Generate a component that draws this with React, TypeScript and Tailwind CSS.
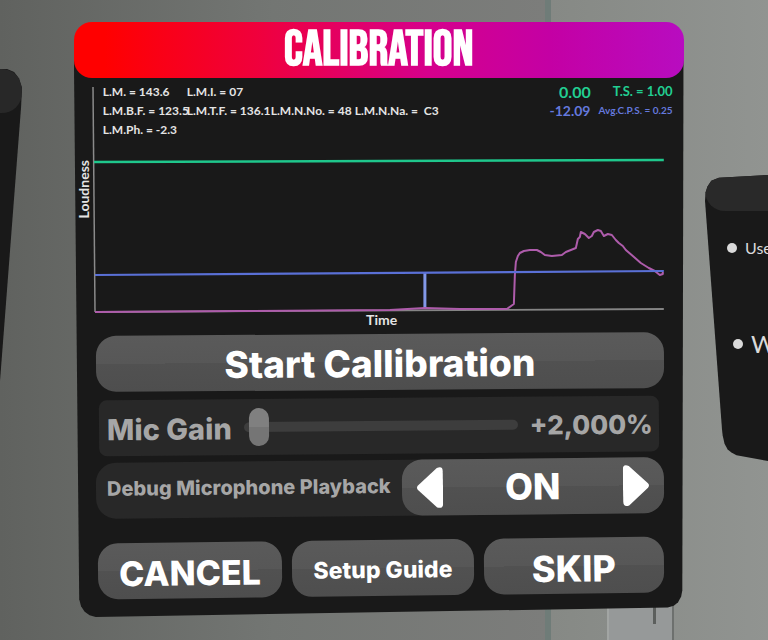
import { useState } from 'react';
import type { ReactNode } from 'react';

const readouts = [
  ['L.M. = 143.6', 'L.M.I. = 07'],
  ['L.M.B.F. = 123.5', 'L.M.T.F. = 136.1', 'L.M.N.No. = 48', 'L.M.N.Na. =  C3'],
  ['L.M.Ph. = -2.3'],
];

const loudness =
  '95,312 240,311 390,310 425,308 460,309 507,309 514,304 515,275 516,262 518,256 520,253 524,251 530,250 537,250 541,252 545,255 552,256 562,255 566,252 571,250 576,248 578,239 580,237 581,232 585,234 589,238 592,236 594,232 598,230 601,231 604,236 608,234 612,235 616,240 619,243 623,246 626,250 633,256 641,263 649,268 655,271 660,275 663,274 663,272';

function PanelButton({ children, className = '' }: { children: ReactNode; className?: string }) {
  return (
    <button
      type="button"
      className={`h-14 rounded-[20px] bg-[linear-gradient(#5a5a5a,#575757_50%,#515151_50%,#4e4e4e)] font-extrabold text-white ${className}`}
    >
      {children}
    </button>
  );
}

function Room() {
  return (
    <div className="absolute inset-0 flex">
      <div className="w-[71%] bg-linear-to-r from-[#60625f] via-[#737673] to-[#7c7d7b]" />
      <div className="w-[6px] bg-[#6f7c78]" />
      <div className="relative flex-1 bg-linear-to-r from-[#868985] to-[#919491]">
        {/* wall plate */}
        <div className="absolute bottom-0 left-14 h-9 w-[67px] border-x-2 border-l-[#a2a5a3] border-r-[#6d706e] bg-[#969999]">
          <div className="ml-auto mr-4 h-5 w-[3px] bg-[#5c5f5d]" />
        </div>
      </div>
    </div>
  );
}

function LeftWindow() {
  return (
    <div className="absolute left-0 top-[69px] h-[312px] w-[22px] bg-[#191919] [clip-path:polygon(0_0,32%_0,64%_1%,86%_3%,100%_6%,96%_12%,0_100%)]">
      <div className="h-11 rounded-r-[20px] bg-[#282828]" />
    </div>
  );
}

function RightWindow() {
  return (
    <aside className="absolute right-0 top-[175px] h-[286px] w-[63px] overflow-hidden whitespace-nowrap bg-[#191919] text-[#dadada] [clip-path:polygon(0_9%,1%_6%,4%_4%,10%_2%,22%_1%,100%_0,100%_100%,50%_98%,42%_97%,36%_96%,31%_94%,28%_91%,27%_89%)]">
      <div className="h-9 rounded-bl-[20px] bg-[#292929]" />
      <ul className="font-['Lato']">
        <li className="ml-[22px] mt-[21px] flex items-center gap-2 text-base/8">
          <span className="size-[10px] shrink-0 rounded-full bg-[#dadada]" />
          Use
        </li>
        <li className="ml-7 mt-16 flex items-center gap-2 text-2xl/8">
          <span className="size-[10px] shrink-0 rounded-full bg-[#dadada]" />
          W
        </li>
      </ul>
    </aside>
  );
}

function Chart() {
  return (
    <div className="flex pl-[2px] pr-5 pt-2 font-['Lato'] font-bold">
      <div className="flex w-4 shrink-0 items-center justify-center pb-5">
        <span className="rotate-180 text-sm/4 text-[#e4e4e4] [writing-mode:vertical-rl]">Loudness</span>
      </div>
      <div className="relative h-[226px] flex-1">
        <svg
          viewBox="92 86 572 226"
          preserveAspectRatio="none"
          fill="none"
          className="absolute inset-0 size-full overflow-visible"
        >
          <path d="M93 87 L95 312" stroke="#8a8a8a" strokeWidth="1.5" />
          <path d="M95 312 L664 309" stroke="#858585" strokeWidth="1.8" />
          <path d="M94 162 L664 160" stroke="#1fc78c" strokeWidth="2.4" />
          <path d="M425 273 V309" stroke="#8298e8" strokeWidth="3" />
          <polyline points={loudness} stroke="#ae5cab" strokeWidth="2" strokeLinejoin="round" />
          <path d="M95 275 L664 271" stroke="#5a70d6" strokeWidth="2.2" />
        </svg>
        <div className="relative -mt-1 -mr-[9px] flex justify-between pl-[11px] text-[#e4e4e4]">
          <div className="text-xs/[19px]">
            {readouts.map((row, i) => (
              <div key={i} className="grid grid-cols-[84px_84px_84px_84px] whitespace-pre">
                {row.map((text) => (
                  <span key={text}>{text}</span>
                ))}
              </div>
            ))}
          </div>
          <div className="flex flex-col text-right">
            <div className="flex h-[19px] items-center justify-end gap-[22px] text-[#22cf92]">
              <span className="text-base">0.00</span>
              <span className="text-[13px]">T.S. = 1.00</span>
            </div>
            <div className="flex h-[19px] items-center justify-end gap-2 whitespace-nowrap text-[#6478dc]">
              <span className="text-sm">-12.09</span>
              <span className="text-[10px]">Avg.C.P.S. = 0.25</span>
            </div>
          </div>
        </div>
      </div>
    </div>
  );
}

export default function App() {
  const [gain, setGain] = useState(2);
  const [playback, setPlayback] = useState(true);
  const toggle = () => setPlayback(!playback);

  return (
    <div className="relative min-h-screen overflow-hidden font-['Inter',sans-serif]">
      <Room />
      <LeftWindow />
      <RightWindow />

      <main className="relative ml-[9.6%] mr-[11%] mt-[22px] pb-[21px]">
        <div className="absolute inset-0 bg-[#191919] [clip-path:polygon(0_3%,100%_3%,99.8%_95.5%,99.6%_96.6%,99.1%_97.5%,98.4%_98.1%,97.4%_98.4%,3.6%_100%,2.6%_99.7%,1.8%_99.1%,1.2%_98.2%,0.9%_97%)]" />
        <div className="relative">
          <h1 className="flex h-14 items-center justify-center rounded-[18px] bg-[linear-gradient(to_right,#ff0000_5%,#f0003c_30%,#d6008c_58%,#c400a4_78%,#b80cc0)] pt-[2px] font-['Bebas_Neue','Liberation_Sans_Narrow','Roboto_Condensed','Liberation_Sans',sans-serif] text-[49px] font-bold text-white">
            CALIBRATION
          </h1>

          <Chart />
          <div className="pl-[6px] text-center font-['Lato'] text-sm/4 font-bold text-[#e4e4e4]">Time</div>

          <div className="mt-[6px] flex flex-col pl-[22px] pr-5">
            <PanelButton className="-rotate-[0.4deg] pt-[2px] text-[37px]">Start Callibration</PanelButton>

            <div className="mt-2 mr-[5px] ml-[3px] flex h-14 -rotate-[0.5deg] items-center gap-3 rounded-lg bg-[#282828] pl-2 pr-[6px] font-extrabold text-[#a6a6a6]">
              <label htmlFor="gain" className="whitespace-nowrap pt-1 text-[29px]">
                Mic Gain
              </label>
              <input
                id="gain"
                type="range"
                value={gain}
                onChange={(e) => setGain(Number(e.target.value))}
                className="h-[10px] min-w-0 flex-1 appearance-none rounded-full bg-[#3d3d3d] [&::-webkit-slider-thumb]:h-[38px] [&::-webkit-slider-thumb]:w-5 [&::-webkit-slider-thumb]:appearance-none [&::-webkit-slider-thumb]:rounded-full [&::-webkit-slider-thumb]:bg-[linear-gradient(#808080_50%,#757575_50%)]"
              />
              <output htmlFor="gain" className="text-[26px]">
                +2,000%
              </output>
            </div>

            <div className="mt-[6px] flex h-14 -rotate-[0.6deg] items-center justify-between rounded-[20px] bg-[#282828] pl-[11px] font-extrabold">
              <span className="whitespace-nowrap pb-1 text-[20px] text-[#a6a6a6]">Debug Microphone Playback</span>
              <div className="flex h-14 w-[262px] items-center justify-between rounded-[20px] bg-[linear-gradient(#5a5a5a,#575757_50%,#515151_50%,#4e4e4e)] px-[15px] text-white">
                <button type="button" aria-label="Previous" onClick={toggle}>
                  <svg viewBox="0 0 26 42" fill="currentColor" className="h-[42px] w-[26px]">
                    <path d="M1 19 L20 1.5 Q26 -1 26 5 V37 Q26 43 20 41 L1 23.5 Q-1 21 1 19Z" />
                  </svg>
                </button>
                <output className="text-[36px]">{playback ? 'ON' : 'OFF'}</output>
                <button type="button" aria-label="Next" onClick={toggle}>
                  <svg viewBox="0 0 26 42" fill="currentColor" className="h-[42px] w-[26px]">
                    <path d="M25 19 L6 1.5 Q0 -1 0 5 V37 Q0 43 6 41 L25 23.5 Q27 21 25 19Z" />
                  </svg>
                </button>
              </div>
            </div>

            <div className="ml-[2px] mt-6 grid -rotate-[0.7deg] grid-cols-[184fr_182fr_180fr] gap-[10px]">
              <PanelButton className="pt-1 text-[34px]">CANCEL</PanelButton>
              <PanelButton className="pt-1 text-[23px]">Setup Guide</PanelButton>
              <PanelButton className="pt-1 text-[36px]">SKIP</PanelButton>
            </div>
          </div>
        </div>
      </main>
    </div>
  );
}
